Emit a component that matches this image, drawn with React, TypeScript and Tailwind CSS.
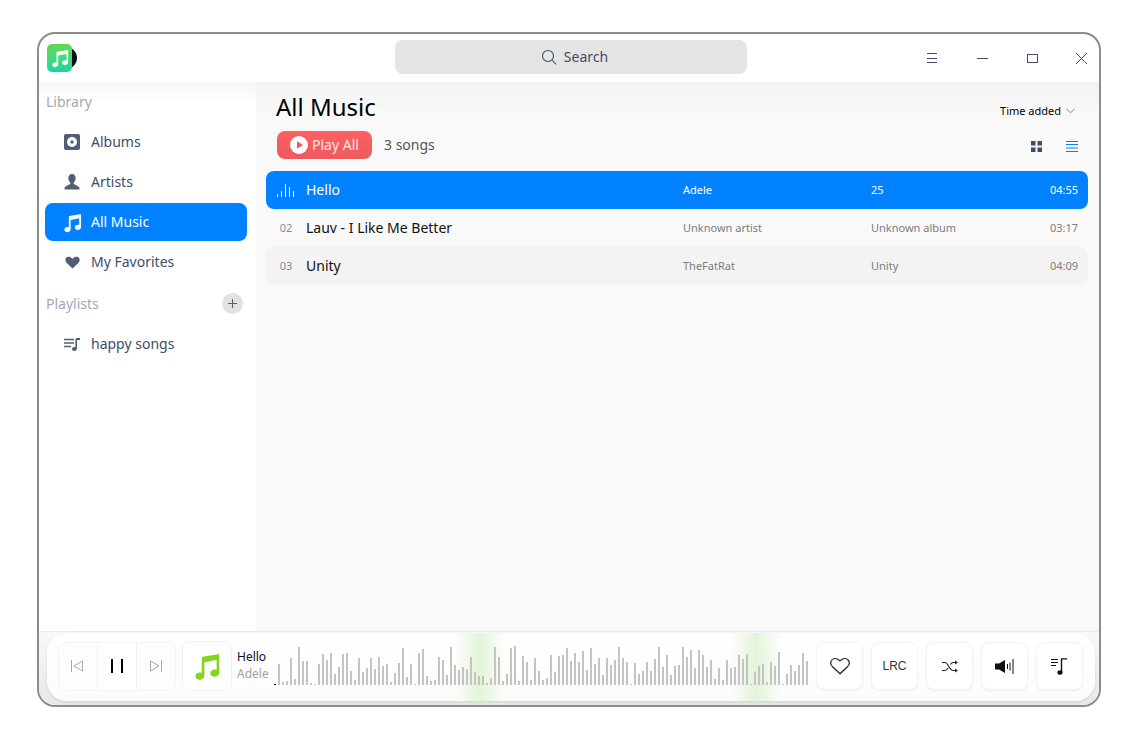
const barsA = [21,3,4,27,6,38,24,24,2,1,21,31,25,32,11,18,31,32,14,5,27,13,17,27,16,28,19,21,3,12,22,37,8,21,1,32,36,9,4,5,28,25,10,38,20,15,18,16,28,13,9,9,2,7,38,28,4,11,37,39,4,29,23,5,27,14,5,7]
const barsB = [30,13,29,30,37,24,32,23,34,15,37,21,27,10,27,20,25,38,27,23,1,22,11,14,23,14,26,38,18,30,10,19,20,38,28,35,17,35,30,18,25,6,17,5,25,17,18,30,26,31,1,13,19,21,3,23,19,33,1,11,20,14,20,32,24]
const bars = [...barsA, ...barsB]

function MusicNote({ className }: { className?: string }) {
  return (
    <svg viewBox="0 0 24 24" className={className} fill="currentColor">
      <path d="M8.5 4.6 20.6 2.5a1 1 0 0 1 1.2 1V17.2c0 1.9-1.7 3.3-3.7 3.3s-3.5-1.1-3.5-2.8 1.6-3 3.5-3c.6 0 1.2.1 1.6.4V7.2L9.9 9v10.6c0 1.9-1.7 3.4-3.7 3.4S2.7 21.900 2.700 20.200s1.600-3 3.500-3c.6 0 1.200.100 1.600.400V5.500a1 1 0 0 1 .7-.9Z" />
    </svg>
  )
}

function Disc() {
  return (
    <svg viewBox="0 0 16 16" className="w-4 h-4">
      <rect width="16" height="16" rx="2" fill="#535d75" />
      <circle cx="8" cy="8" r="5" fill="#fff" />
      <circle cx="8" cy="8" r="1.700" fill="#535d75" />
    </svg>
  )
}

function Person() {
  return (
    <svg viewBox="0 0 16 16" className="w-4 h-4" fill="#535d75">
      <path d="M8 0c2.300 0 3.700 1.700 3.700 4 0 2-1 3.700-2 4.500v1.300c0 .7 4.800 1.800 5.800 4.200v1.500H.5V14c1-2.400 5.800-3.500 5.800-4.200V8.500c-1-.8-2-2.500-2-4.500C4.300 1.700 5.700 0 8 0Z" />
    </svg>
  )
}

function Heart() {
  return (
    <svg viewBox="0 0 16 16" className="w-[15px] h-[15px]" fill="#535d75">
      <path d="M8 14.500 1.800 8.600C.2 7-.1 4.600 1.200 3 2.600 1.300 5.600 1.200 8 4c2.400-2.800 5.400-2.700 6.800-1 1.300 1.600 1 4-.6 5.600L8 14.500Z" />
    </svg>
  )
}

function PlaylistIcon() {
  return (
    <svg viewBox="0 0 16 13" className="w-4 h-[13px]" fill="none">
      <path d="M0 1.500h10M0 5h10M0 8.500h7" stroke="#535d75" strokeWidth="1.500" />
      <path d="M12.200 1v10" stroke="#535d75" strokeWidth="1.600" />
      <path d="M12 1h4" stroke="#535d75" strokeWidth="2" />
      <ellipse cx="10.400" cy="11" rx="2.400" ry="2" fill="#535d75" />
    </svg>
  )
}

function NavItem({ icon, label, active }: { icon: React.ReactNode; label: string; active?: boolean }) {
  return (
    <div className={`h-[38px] mb-[2px] rounded-lg flex items-center pl-[19px] gap-[11px] text-[14px] ${active ? 'bg-[#0081ff] text-white' : 'text-[#414d68]'}`}>
      <span className="w-4 flex justify-center">{icon}</span>
      <span className="mb-[2px]">{label}</span>
    </div>
  )
}

function SongRow({ no, title, artist, album, time, className, active }: { no: React.ReactNode; title: string; artist: string; album: string; time: string; className: string; active?: boolean }) {
  return (
    <div className={`h-[38px] rounded-lg flex items-center ${className}`}>
      <div className={`w-[40px] text-center text-[11px] ${active ? '' : 'text-[#8a8a8a]'}`}>{no}</div>
      <div className="w-[377px] text-[14px] mb-[2px]">{title}</div>
      <div className={`w-[188px] text-[11px] ${active ? '' : 'text-[#7d7d7d]'}`}>{artist}</div>
      <div className={`flex-1 text-[11px] ${active ? '' : 'text-[#7d7d7d]'}`}>{album}</div>
      <div className={`pr-[10px] text-[11px] ${active ? '' : 'text-[#7d7d7d]'}`}>{time}</div>
    </div>
  )
}

function ToolButton({ children }: { children: React.ReactNode }) {
  return (
    <div className="w-[47px] h-[48px] rounded-lg bg-white border border-[#f3f3f3] shadow-[0_1px_2px_rgba(0,0,0,0.05)] flex items-center justify-center">
      {children}
    </div>
  )
}

export default function App() {
  return (
    <div className="w-[1133px] h-[742px] bg-white pt-[32px] pl-[37px] overflow-hidden font-['Noto_Sans',sans-serif]">
      <div className="w-[1064px] h-[675px] border-2 border-[#8c8c8c] rounded-[18px] overflow-hidden flex flex-col bg-white">
        {/* title bar */}
        <div className="h-[48px] shrink-0 flex items-center relative">
          <div className="ml-[8px] w-[30px] h-[28px] relative">
            <div className="absolute right-0 top-[3px] w-[22px] h-[22px] rounded-full bg-[#111]" />
            <div className="absolute left-0 top-0 w-[25px] h-[28px] rounded-[5px] bg-gradient-to-b from-[#62d84f] to-[#12d6a0] flex items-center justify-center text-[#f2fff5]">
              <MusicNote className="w-[20px] h-[20px] shrink-0" />
            </div>
          </div>
          <div className="absolute left-[356px] top-[6px] w-[352px] h-[34px] rounded-lg bg-[#e4e4e4] flex items-center justify-center gap-[7px] pl-[7px] text-[14px] text-[#414d68]">
            <svg viewBox="0 0 16 16" className="w-4 h-4" fill="none" stroke="#414d68" strokeWidth="1.100">
              <circle cx="7" cy="7" r="5.500" />
              <path d="m11 11 4 4.300" />
            </svg>
            <span className="mb-[2px]">Search</span>
          </div>
          <div className="ml-auto flex items-center text-[#414d68]">
            <svg viewBox="0 0 10 10" className="w-[10px] h-[10px] mr-[40px]" stroke="#414d68" strokeWidth="1" fill="none">
              <path d="M0 .5h10M0 5.500h10M0 9.500h10" />
            </svg>
            <div className="w-[11px] h-px bg-[#414d68] mr-[39px]" />
            <div className="w-[11px] h-[9px] border border-[#414d68] mr-[38px]" />
            <svg viewBox="0 0 11 11" className="w-[11px] h-[11px] mr-[12px]" stroke="#414d68" strokeWidth="1" fill="none">
              <path d="m0 0 11 11M11 0 0 11" />
            </svg>
          </div>
        </div>

        <div className="flex-1 flex min-h-0">
          {/* sidebar */}
          <div className="w-[217px] shrink-0 bg-gradient-to-b from-[#f5f5f5] via-white to-white bg-[length:100%_40px] bg-no-repeat">
            <div className="pl-[7px] pt-[9px] h-[39px] text-[14px] text-[#a3a8b4]">Library</div>
            <div className="pl-[6px] pr-[9px] pt-[2px]">
              <NavItem icon={<Disc />} label="Albums" />
              <NavItem icon={<Person />} label="Artists" />
              <NavItem icon={<MusicNote className="w-[21px] h-[21px] shrink-0" />} label="All Music" active />
              <NavItem icon={<Heart />} label="My Favorites" />
            </div>
            <div className="pl-[7px] pr-[13px] h-[40px] flex items-center justify-between text-[14px] text-[#a3a8b4]">
              <span>Playlists</span>
              <div className="w-[21px] h-[21px] rounded-full bg-[#e2e2e2] flex items-center justify-center">
                <svg viewBox="0 0 9 9" className="w-[9px] h-[9px]" stroke="#535d75" strokeWidth="1">
                  <path d="M4.500 0v9M0 4.500h9" />
                </svg>
              </div>
            </div>
            <div className="pl-[6px] pr-[9px] mt-[2px]">
              <NavItem icon={<PlaylistIcon />} label="happy songs" />
            </div>
          </div>

          {/* main */}
          <div className="flex-1 bg-gradient-to-b from-[#f3f3f3] to-[#f9f9f9] bg-[length:100%_30px] bg-no-repeat bg-[#f9f9f9] flex flex-col pl-[10px] pr-[11px]">
            <div className="flex items-start justify-between pl-[10px] pr-[2px]">
              <div className="text-[24px] leading-[33px] pt-[8px] text-black h-[46px]">All Music</div>
              <div className="flex items-center gap-[5px] text-[11px] text-black pt-[21px] pr-[11px]">
                <span>Time added</span>
                <svg viewBox="0 0 10 6" className="w-[9px] h-[6px]" fill="none" stroke="#6e7688" strokeWidth="1">
                  <path d="m.5.500 4.500 4.500 4.500-4.500" />
                </svg>
              </div>
            </div>
            <div className="flex items-center pl-[11px] pr-[10px] h-[28px] mt-[3px]">
              <div className="w-[95px] h-[28px] rounded-lg bg-gradient-to-b from-[#ff6060] to-[#ec5a5f] flex items-center pl-[13px] gap-[4px] text-[14px] text-[#ffe6e6]">
                <svg viewBox="0 0 18 18" className="w-[18px] h-[18px]">
                  <circle cx="9" cy="9" r="9" fill="#fff" />
                  <path d="M7 5.200v7.600L13 9Z" fill="#f05a5f" />
                </svg>
                <span className="mb-[2px]">Play All</span>
              </div>
              <span className="ml-[12px] mb-[2px] text-[14px] text-[#555]">3 songs</span>
              <div className="ml-auto mt-[2px] flex items-center gap-[24px]">
                <svg viewBox="0 0 11 11" className="w-[11px] h-[11px]" fill="#414d68">
                  <rect width="4.500" height="4.500" />
                  <rect x="6.500" width="4.500" height="4.500" />
                  <rect y="6.500" width="4.500" height="4.500" />
                  <rect x="6.500" y="6.500" width="4.500" height="4.500" />
                </svg>
                <svg viewBox="0 0 12 11" className="w-3 h-[11px]" stroke="#0081ff" strokeWidth="1">
                  <path d="M0 .5h12M0 3.500h12M0 7h12M0 10.500h12" />
                </svg>
              </div>
            </div>
            <div className="mt-[12px]">
              <SongRow
                active
                className="bg-[#0081ff] text-white"
                no={
                  <svg viewBox="0 0 18 14" className="w-[18px] h-[14px] ml-[11px]" stroke="#fff" strokeWidth="1">
                    <path d="M.5 14v-3M4.500 14V8M8.500 14V1M12.500 14V4M16.500 14V8" />
                  </svg>
                }
                title="Hello"
                artist="Adele"
                album="25"
                time="04:55"
              />
              <SongRow className="text-[#111]" no="02" title="Lauv - I Like Me Better" artist="Unknown artist" album="Unknown album" time="03:17" />
              <SongRow className="bg-[#f3f3f3] text-[#111]" no="03" title="Unity" artist="TheFatRat" album="Unity" time="04:09" />
            </div>
          </div>
        </div>

        {/* player */}
        <div className="h-[74px] shrink-0 bg-gradient-to-b from-[#f9f9f9] to-[#e8e8e8] pl-[8px] pr-[4px] pt-[1px] border-t border-[#ececec]">
          <div className="h-[68px] rounded-[20px] bg-gradient-to-b from-white to-[#fcfcfc] shadow-[0_1px_3px_rgba(0,0,0,0.1)] flex items-center pl-[11px] pb-[2px]">
            <div className="w-[118px] h-[49px] rounded-lg border border-[#f4f4f4] bg-[#fdfdfd] flex">
              <div className="w-[39px] pr-[3px] flex items-center justify-center">
                <svg viewBox="0 0 12 12" className="w-3 h-3" fill="none" stroke="#a8a8a8" strokeWidth="1">
                  <path d="M.5 0v12M11.500 1v10L3 6Z" />
                </svg>
              </div>
              <div className="w-[40px] bg-white border-x border-[#f1f1f1] flex items-center justify-center gap-[8px]">
                <div className="w-[2px] h-[14px] bg-black" />
                <div className="w-[2px] h-[14px] bg-black" />
              </div>
              <div className="w-[39px] pl-[1px] flex items-center justify-center">
                <svg viewBox="0 0 12 12" className="w-3 h-3" fill="none" stroke="#a8a8a8" strokeWidth="1">
                  <path d="M11.500 0v12M.5 1v10L9 6Z" />
                </svg>
              </div>
            </div>
            <div className="ml-[6px] w-[50px] h-[50px] rounded-lg border border-[#f1f1f1] bg-white flex items-center justify-center text-[#84d61c]">
              <MusicNote className="w-[30px] h-[30px] shrink-0" />
            </div>
            <div className="ml-[5px] w-[41px]">
              <div className="text-[12px] leading-[16px] text-[#111]">Hello</div>
              <div className="text-[12px] leading-[18px] text-[#a3a3a3]">Adele</div>
            </div>
            <div className="relative self-start w-[531px] h-[68px] flex items-end gap-[2px] pb-[16px]">
              <div className="absolute left-[-4px] bottom-[16px] w-[2px] h-px bg-black" />
              <div className="absolute left-[176px] top-0 w-[52px] h-full bg-gradient-to-r from-transparent via-[#e3f4d8] to-transparent" />
              <div className="absolute left-[452px] top-0 w-[52px] h-full bg-gradient-to-r from-transparent via-[#e3f4d8] to-transparent" />
              {bars.map((h, i) => (
                <div key={i} className="relative w-[2px] shrink-0 bg-[#c4c4c4]" style={{ height: h }} />
              ))}
            </div>
            <div className="flex gap-[8px] ml-[7px]">
              <ToolButton>
                <svg viewBox="0 0 20 18" className="w-5 h-[18px]" fill="none" stroke="#222" strokeWidth="1.200">
                  <path d="M10 16.800 2.500 9.700C.6 7.800.4 4.900 1.900 3c1.700-2.100 5.400-2.200 8.100.9 2.700-3.100 6.400-3 8.100-.9 1.500 1.900 1.300 4.800-.6 6.700L10 16.800Z" />
                </svg>
              </ToolButton>
              <ToolButton>
                <span className="text-[12px] font-['Liberation_Sans',sans-serif] text-[#333] scale-y-110">LRC</span>
              </ToolButton>
              <ToolButton>
                <svg viewBox="0 0 16 13" className="w-4 h-[13px]" fill="none" stroke="#222" strokeWidth="1.200">
                  <path d="M0 2.500h3c3 0 4.500 8 8 8h3M0 10.500h3c1.300 0 2.300-1.300 3-2.500M8.500 4.500c.7-1 1.500-2 2.500-2h3" />
                  <path d="M13 .5 16 2.500 13 4.500ZM13 8.500l3 2-3 2Z" fill="#222" stroke="none" />
                </svg>
              </ToolButton>
              <ToolButton>
                <svg viewBox="0 0 19 15" className="w-[19px] h-[15px]" fill="#111">
                  <path d="M0 4.500h4L10 1v13L4 10.500H0Z" />
                  <path d="M12.500 5v5M15 3.500v8M18 0v15" stroke="#111" strokeWidth="1" />
                </svg>
              </ToolButton>
              <ToolButton>
                <svg viewBox="0 0 17 17" className="w-[17px] h-[17px]" fill="none">
                  <path d="M0 1.500h7M0 4.500h7M0 7.500h5" stroke="#111" strokeWidth="1" />
                  <path d="M10.500 1v13" stroke="#111" strokeWidth="1.400" />
                  <path d="M10 .9h6" stroke="#111" strokeWidth="1.400" />
                  <ellipse cx="9" cy="14.500" rx="2.600" ry="2.300" fill="#111" />
                </svg>
              </ToolButton>
            </div>
          </div>
        </div>
      </div>
    </div>
  )
}
